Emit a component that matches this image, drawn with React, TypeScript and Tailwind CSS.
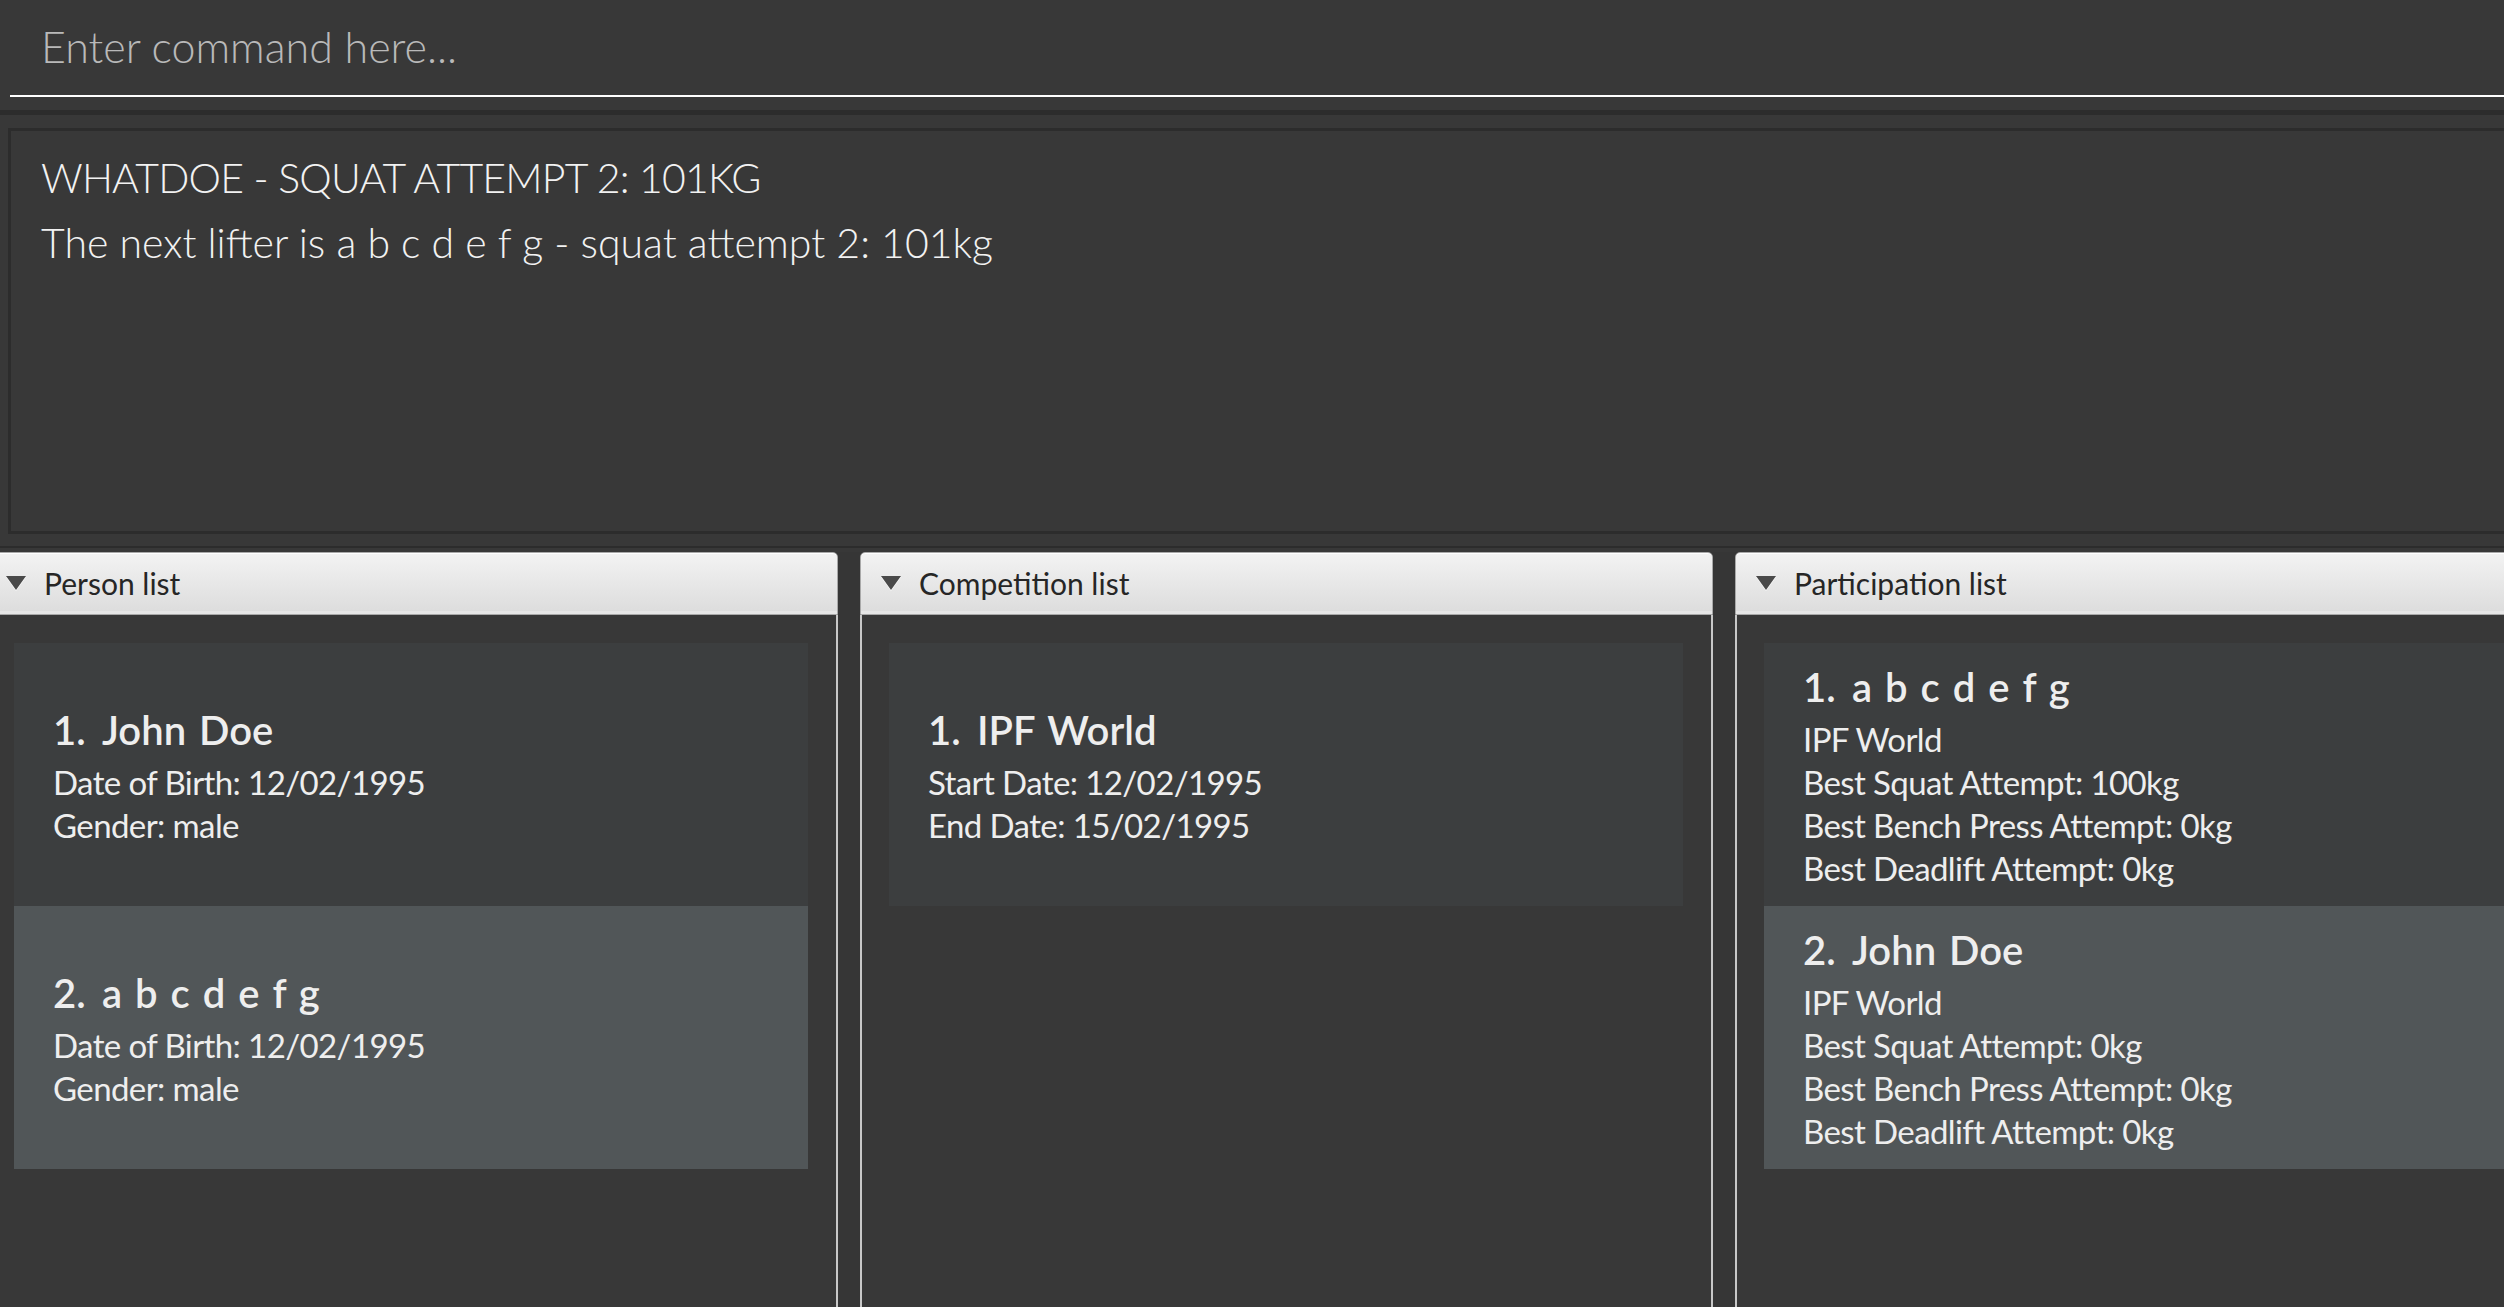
import React from "react";

type Card = { title: string; lines: string[] };

const people: Card[] = [
  { title: "John Doe", lines: ["Date of Birth: 12/02/1995", "Gender: male"] },
  { title: "a b c d e f g", lines: ["Date of Birth: 12/02/1995", "Gender: male"] },
];

const competitions: Card[] = [
  { title: "IPF World", lines: ["Start Date: 12/02/1995", "End Date: 15/02/1995"] },
];

const participations: Card[] = [
  {
    title: "a b c d e f g",
    lines: [
      "IPF World",
      "Best Squat Attempt: 100kg",
      "Best Bench Press Attempt: 0kg",
      "Best Deadlift Attempt: 0kg",
    ],
  },
  {
    title: "John Doe",
    lines: [
      "IPF World",
      "Best Squat Attempt: 0kg",
      "Best Bench Press Attempt: 0kg",
      "Best Deadlift Attempt: 0kg",
    ],
  },
];

const font = "font-['Lato','Liberation_Sans',sans-serif]";

const ListCard = ({ card, index }: { card: Card; index: number }) => (
  <div
    className={`h-[263px] flex flex-col justify-center pl-[39px] pb-[4px] text-[#eeeeee] ${
      index % 2 === 0 ? "bg-[#3c3e3f]" : "bg-[#515658]"
    }`}
  >
    <div className="flex items-center h-[62px] text-[40px] font-semibold leading-[62px] [word-spacing:3px]">
      <span className="w-[49px]">{index + 1}.</span>
      <span>{card.title}</span>
    </div>
    {card.lines.map((line) => (
      <div key={line} className="text-[33px] leading-[43px] tracking-[-0.6px]">
        {line}
      </div>
    ))}
  </div>
);

const Panel = ({ title, items }: { title: string; items: Card[] }) => (
  <div className="w-[853px] shrink-0 flex flex-col">
    <div className="h-[63px] flex items-center rounded-t-[5px] border border-[#a9a9a9] bg-gradient-to-b from-[#f3f3f3] to-[#dcdcdc] shadow-[inset_0_1px_0_#ffffff,inset_0_-3px_0_#e6e6e6]">
      <svg width="20" height="15" viewBox="0 0 20 15" className="ml-[20px] mr-[18px]">
        <polygon points="0,1 20,1 10,15" fill="#ffffff" />
        <polygon points="0,0 20,0 10,14" fill="#4a4a4a" />
      </svg>
      <span className="text-[30px] text-[#262626]">{title}</span>
    </div>
    <div className="flex-1 border-x-2 border-[#c8c8c8] bg-[#383838] pt-[28px] pl-[27px] pr-[28px]">
      {items.map((card, i) => (
        <ListCard key={card.title + i} card={card} index={i} />
      ))}
    </div>
  </div>
);

export default function App() {
  return (
    <div className={`h-[1307px] w-full overflow-hidden bg-[#383838] flex flex-col ${font}`}>
      <div className="h-[97px] shrink-0 pl-[10px]">
        <div className="h-full flex items-center border-b-2 border-white pl-[31px] text-[43px] font-light text-[#b9b9b9]">
          Enter command here...
        </div>
      </div>
      <div className="h-[13px] shrink-0" />
      <div className="h-[5px] shrink-0 bg-[#2c2c2c]" />
      <div className="h-[13px] shrink-0" />
      <div className="h-[406px] shrink-0 ml-[8px] -mr-[20px] border-[3px] border-[#2c2c2c] pt-[14px] pl-[30px] text-[41px] font-light leading-[65px] text-[#f2f2f2]">
        <div className="tracking-[-0.8px]">WHATDOE - SQUAT ATTEMPT 2: 101KG</div>
        <div>The next lifter is a b c d e f g - squat attempt 2: 101kg</div>
      </div>
      <div className="h-[12px] shrink-0" />
      <div className="h-[2px] shrink-0 bg-[#2c2c2c]" />
      <div className="h-[4px] shrink-0" />
      <div className="flex-1 flex gap-[22px] -ml-[15px] bg-[#363636]">
        <Panel title="Person list" items={people} />
        <Panel title="Competition list" items={competitions} />
        <Panel title="Participation list" items={participations} />
      </div>
    </div>
  );
}
